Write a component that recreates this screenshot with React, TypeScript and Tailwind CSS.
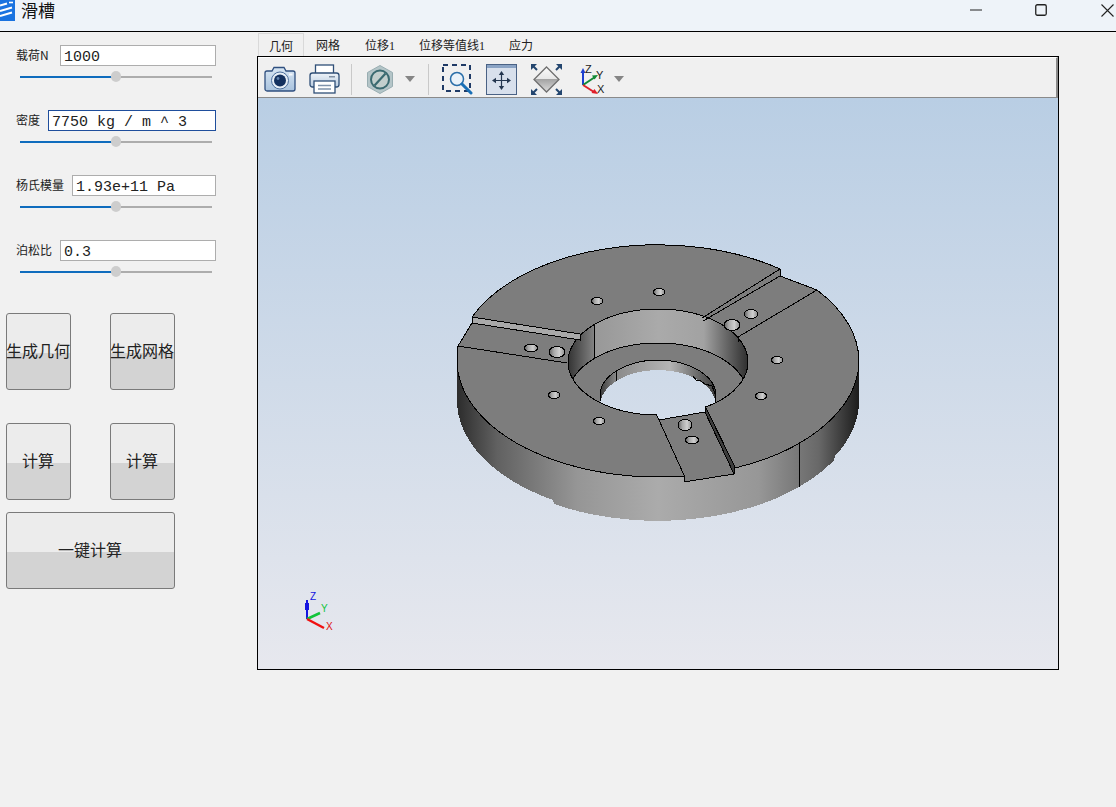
const tabs = ["几何", "网格", "位移1", "位移等值线1", "应力"];

const params = [
  { label: "载荷N", labelWidth: "w-9", value: "1000", focused: false },
  { label: "密度", labelWidth: "w-6", value: "7750 kg / m ^ 3", focused: true },
  { label: "杨氏模量", labelWidth: "w-12", value: "1.93e+11 Pa", focused: false },
  { label: "泊松比", labelWidth: "w-9", value: "0.3", focused: false },
];

// model holes: cx, cy, rx, ry
const holes = [
  [597, 301, 5.5, 3.5],
  [659, 292, 5.5, 3.5],
  [751, 314, 6.5, 4.5],
  [732, 325, 8, 5.5],
  [777, 360, 5.5, 3.5],
  [761, 396, 5.5, 3.5],
  [685, 425, 7, 5.5],
  [692, 440, 6.5, 4],
  [599, 421, 5.5, 3.5],
  [554, 395, 5.5, 3.5],
  [531, 348, 6.5, 4],
  [557, 352, 8, 5.5],
];

const ParamRow = ({ label, labelWidth, value, focused }: (typeof params)[number]) => (
  <div className="w-[216px] pl-4">
    <div className="flex h-[21px] items-center gap-2">
      <span className={`${labelWidth} -mt-[2px] whitespace-nowrap text-xs text-[#222] font-['Noto_Sans_CJK_SC',sans-serif]`}>
        {label}
      </span>
      <input
        readOnly
        value={value}
        className={`h-[21px] min-w-0 flex-1 border bg-white px-[3px] pt-[3px] text-[15px] leading-none text-[#222] outline-none font-['Liberation_Mono',monospace] ${
          focused ? "border-[#1f4e9c]" : "border-[#adadad]"
        }`}
      />
    </div>
    <div className="relative mt-[5px] ml-1 flex h-[11px] w-[192px] items-center">
      <div className="h-[2px] w-[96px] bg-[#0f6cbd]" />
      <div className="h-[2px] flex-1 bg-[#adadad]" />
      <div className="absolute left-[91px] top-0 h-[11px] w-[10px] rounded-full bg-[#cdcdcd]" />
    </div>
  </div>
);

const ActionButton = ({ text, wide }: { text: string; wide?: boolean }) => (
  <button
    className={`h-[77px] ${
      wide ? "col-span-2 w-[169px]" : "w-[65px]"
    } flex items-center justify-center whitespace-nowrap rounded-[3px] border border-[#7a7a7a] bg-[linear-gradient(#ececec_52%,#d3d3d3_52%)] pb-[4px] pr-[1px] text-base text-[#222] font-['Noto_Sans_CJK_SC',sans-serif]`}
  >
    {text}
  </button>
);

const Caret = () => (
  <svg width="10" height="6" viewBox="0 0 10 6" className="shrink-0">
    <polygon points="0,0 10,0 5,6" fill="#858585" />
  </svg>
);

const Sep = () => <div className="h-[31px] w-px shrink-0 bg-[#c9c9c9]" />;

const CameraIcon = () => (
  <svg width="32" height="26" viewBox="0 0 32 26" className="shrink-0">
    <defs>
      <linearGradient id="cam" x1="0" y1="0" x2="0" y2="1">
        <stop offset="0" stopColor="#d8e6f3" />
        <stop offset="1" stopColor="#a9c3de" />
      </linearGradient>
    </defs>
    <path
      d="M3 5h5l2-3.500h10l2 3.500h7a2 2 0 0 1 2 2v16a2 2 0 0 1-2 2H3a2 2 0 0 1-2-2V7a2 2 0 0 1 2-2z"
      fill="url(#cam)"
      stroke="#2f4f7f"
      strokeWidth="1.3"
    />
    <circle cx="16" cy="14.500" r="8.500" fill="#e6eef6" stroke="#4d6f9c" />
    <circle cx="16" cy="14.500" r="6" fill="#14315f" />
    <circle cx="14" cy="12.500" r="1.400" fill="#5f81ad" />
    <rect x="25" y="7.500" width="3.500" height="2" fill="#f5f8fb" />
  </svg>
);

const PrinterIcon = () => (
  <svg width="31" height="30" viewBox="0 0 31 30" className="shrink-0">
    <defs>
      <linearGradient id="prn" x1="0" y1="0" x2="0" y2="1">
        <stop offset="0" stopColor="#eef3f8" />
        <stop offset="1" stopColor="#b8cbe0" />
      </linearGradient>
    </defs>
    <rect x="6.500" y="1" width="18" height="10" fill="#fff" stroke="#2f4f77" strokeWidth="1.3" />
    <rect x="1" y="9" width="29" height="14" rx="2.500" fill="url(#prn)" stroke="#2f4f77" strokeWidth="1.3" />
    <rect x="20" y="12" width="6" height="1.500" fill="#7f8fa3" />
    <rect x="5" y="17" width="21" height="12" fill="#fff" stroke="#2f4f77" strokeWidth="1.3" />
    <path d="M9 21.500h13M9 25h13" stroke="#7f93ab" strokeWidth="1.300" />
  </svg>
);

const HexIcon = () => (
  <svg width="26" height="29" viewBox="0 0 26 29" className="shrink-0">
    <polygon points="13,0.500 25.500,7.500 25.500,21.500 13,28.500 0.500,21.500 0.500,7.500" fill="#b4c5c8" stroke="#98adb1" />
    <circle cx="13" cy="14.500" r="9" fill="#c2cfcd" stroke="#3a6a70" strokeWidth="2" />
    <path d="M7.500 20.500L18.500 8.500" stroke="#3a6a70" strokeWidth="2.200" />
  </svg>
);

const ZoomBoxIcon = () => (
  <svg width="31" height="31" viewBox="0 0 31 31" className="shrink-0">
    <rect x="1" y="1" width="27" height="26" fill="none" stroke="#1f3a66" strokeWidth="2" strokeDasharray="5 4" />
    <circle cx="15" cy="15" r="6.500" fill="#eaf2f9" stroke="#2a6ea8" strokeWidth="1.500" />
    <path d="M20 20l9 9" stroke="#1a6fb5" strokeWidth="3" strokeLinecap="round" />
  </svg>
);

const FitIcon = () => (
  <svg width="31" height="31" viewBox="0 0 31 31" className="shrink-0">
    <rect x="0.500" y="0.500" width="30" height="30" fill="#d8e0ec" stroke="#4a6285" />
    <rect x="1" y="1" width="29" height="3" fill="#8aa3c4" />
    <path d="M15.500 9v14M8 16.500h15" stroke="#24364f" strokeWidth="1.200" />
    <polygon points="15.500,7 12.800,11 18.200,11" fill="#24364f" />
    <polygon points="15.500,26 12.800,22 18.200,22" fill="#24364f" />
    <polygon points="6,16.500 10,13.800 10,19.200" fill="#24364f" />
    <polygon points="25,16.500 21,13.800 21,19.200" fill="#24364f" />
  </svg>
);

const DiamondIcon = () => (
  <svg width="31" height="31" viewBox="0 0 31 31" className="shrink-0">
    <defs>
      <linearGradient id="dia" x1="0" y1="0" x2="0" y2="1">
        <stop offset="0" stopColor="#fafafa" />
        <stop offset="0.500" stopColor="#e6e6e6" />
        <stop offset="0.500" stopColor="#a4a4a4" />
        <stop offset="1" stopColor="#dcdcdc" />
      </linearGradient>
    </defs>
    <polygon points="15.500,3 28,15.500 15.500,28 3,15.500" fill="url(#dia)" stroke="#6f6f6f" strokeWidth="1.300" />
    <g stroke="#24466f" strokeWidth="2">
      <path d="M2 2l4 4M29 2l-4 4M2 29l4-4M29 29l-4-4" />
    </g>
    <g fill="#24466f">
      <polygon points="0,0 6,0 0,6" />
      <polygon points="31,0 25,0 31,6" />
      <polygon points="0,31 6,31 0,25" />
      <polygon points="31,31 25,31 31,25" />
    </g>
  </svg>
);

const AxesIcon = () => (
  <svg width="30" height="31" viewBox="0 0 30 31" className="shrink-0">
    <path d="M6 21V8" stroke="#1c3fd0" strokeWidth="2" />
    <polygon points="6,4 3.500,9 8.500,9" fill="#1c3fd0" />
    <path d="M6 21l12-8" stroke="#118a35" strokeWidth="2" />
    <polygon points="21,11 15,11.500 17.500,15.500" fill="#118a35" />
    <path d="M6 21l11 7" stroke="#e0202a" strokeWidth="2" />
    <polygon points="21,30 14.500,29 17.500,25" fill="#e0202a" />
    <text x="8" y="9" fontSize="11" fill="#222" fontFamily="Liberation Sans, sans-serif">Z</text>
    <text x="19" y="15" fontSize="11" fill="#222" fontFamily="Liberation Sans, sans-serif">Y</text>
    <text x="20" y="29" fontSize="11" fill="#222" fontFamily="Liberation Sans, sans-serif">X</text>
  </svg>
);

const Model = () => (
  <svg viewBox="258 98 800 571" className="block h-full w-full">
    <defs>
      <linearGradient id="sky" gradientUnits="userSpaceOnUse" x1="0" y1="98" x2="0" y2="669">
        <stop offset="0" stopColor="#b9cee4" />
        <stop offset="1" stopColor="#e7e8ee" />
      </linearGradient>
      <linearGradient id="side" gradientUnits="userSpaceOnUse" x1="457" y1="0" x2="859" y2="0">
        <stop offset="0" stopColor="#2c2c2c" />
        <stop offset="0.1" stopColor="#616161" />
        <stop offset="0.3" stopColor="#969696" />
        <stop offset="0.5" stopColor="#ababab" />
        <stop offset="0.75" stopColor="#979797" />
        <stop offset="0.9" stopColor="#686868" />
        <stop offset="1" stopColor="#1c1c1c" />
      </linearGradient>
      <linearGradient id="wall" gradientUnits="userSpaceOnUse" x1="568" y1="0" x2="749" y2="0">
        <stop offset="0" stopColor="#333" />
        <stop offset="0.14" stopColor="#808080" />
        <stop offset="0.15" stopColor="#989898" />
        <stop offset="0.5" stopColor="#aaa" />
        <stop offset="0.75" stopColor="#a2a2a2" />
        <stop offset="1" stopColor="#2c2c2c" />
      </linearGradient>
      <linearGradient id="holeWall" gradientUnits="userSpaceOnUse" x1="600" y1="0" x2="716" y2="0">
        <stop offset="0" stopColor="#3a3a3a" />
        <stop offset="0.14" stopColor="#8a8a8a" />
        <stop offset="0.6" stopColor="#b5b5b5" />
        <stop offset="1" stopColor="#3a3a3a" />
      </linearGradient>
      <linearGradient id="hole" x1="0" y1="0" x2="1" y2="0">
        <stop offset="0" stopColor="#5e5e5e" />
        <stop offset="0.3" stopColor="#a8a8a8" />
        <stop offset="0.65" stopColor="#d0d0d0" />
        <stop offset="1" stopColor="#8a8a8a" />
      </linearGradient>
      <clipPath id="bore">
        <ellipse cx="658" cy="362" rx="90" ry="53" />
      </clipPath>
    </defs>

    <g shapeRendering="crispEdges" stroke="#000" strokeWidth="1">
      {/* outer wall */}
      <path
        d="M457 362V400A201 117 0 0 0 553 500L554 504A201 117 0 0 0 834 460L835 456A201 117 0 0 0 859 402V362Z"
        fill="url(#side)"
        stroke="none"
      />
      {/* top face */}
      <path
        d="M472 317A201 117 0 0 1 780 269L780 276L817 290A201 117 0 0 1 859 362A201 117 0 0 1 735 468L734 474L684 482L684 476A201 117 0 0 1 457 362L458 346L472 323Z"
        fill="#7d7d7d"
      />
      <path d="M799 444V487" fill="none" />

      {/* counterbore */}
      <ellipse cx="658" cy="362" rx="90" ry="53" fill="url(#wall)" />
      <g clipPath="url(#bore)">
        <path d="M594 320V360" fill="none" />
        <ellipse cx="658" cy="396" rx="90" ry="53" fill="#7d7d7d" />
        <ellipse cx="658" cy="396" rx="58" ry="36" fill="url(#holeWall)" />
        <ellipse cx="658" cy="406" rx="58" ry="36" fill="url(#sky)" stroke="none" />
        <path d="M616 371V381" fill="none" />
        <path d="M693 376L696 380L701 381L705 384L712 386L716 396" fill="none" />
      </g>
      <ellipse cx="658" cy="362" rx="90" ry="53" fill="none" />

      {/* front slot */}
      <polygon points="656,413 659,420 705,412 705,405" fill="url(#sky)" stroke="none" />
      <polygon points="659,420 705,412 734,474 684,482 684,475" fill="#7d7d7d" />
      <polygon points="705,406 735,467 734,474 705,412" fill="#3d3d3d" />
      <path d="M656 414L659 420" fill="none" />

      {/* left slot */}
      <polygon points="472,317 580,334 580,340 472,323" fill="#a9a9a9" />
      <path d="M458 346L567 363" fill="none" />

      {/* right slot */}
      <path d="M780 269L702 318M780 276L703 321M817 290L738 337L738 342" fill="none" />

      {holes.map(([cx, cy, rx, ry]) => (
        <ellipse key={`${cx}-${cy}`} cx={cx} cy={cy} rx={rx} ry={ry} fill="url(#hole)" />
      ))}
    </g>

    {/* triad */}
    <path d="M307 619V600" stroke="#1414e0" strokeWidth="2" />
    <rect x="305" y="603" width="4" height="7" fill="#1414e0" />
    <path d="M307 619L320 613" stroke="#12c43a" strokeWidth="2.500" />
    <path d="M307 619L324 628" stroke="#f01010" strokeWidth="2.500" />
    <text x="310" y="600" fontSize="10" fill="#1414e0" fontFamily="Liberation Sans, sans-serif">Z</text>
    <text x="321" y="612" fontSize="10" fill="#12c43a" fontFamily="Liberation Sans, sans-serif">Y</text>
    <text x="326" y="630" fontSize="10" fill="#e01010" fontFamily="Liberation Sans, sans-serif">X</text>
  </svg>
);

export default function App() {
  return (
    <div className="flex h-[807px] w-full flex-col overflow-hidden bg-[#f1f1f1]">
      {/* title bar */}
      <div className="flex h-[32px] shrink-0 border-b border-black bg-[#eef3f9]">
        <div className="flex h-[21px] flex-1 items-start">
          <svg width="15" height="21" viewBox="0 0 15 21" className="shrink-0">
            <rect width="15" height="21" fill="#1a73e0" />
            <path d="M0 5.500L7 3.500M0 11L12 7.500M0 16L12 12.500" stroke="#fff" strokeWidth="2" fill="none" />
            <path d="M9 2.500h4" stroke="#fff" strokeWidth="1.600" />
          </svg>
          <span className="ml-[6px] text-[17px] leading-[20px] text-[#111] font-['Noto_Sans_CJK_SC',sans-serif]">
            滑槽
          </span>
        </div>
        <div className="flex h-[20px] items-center">
          <svg width="12" height="2" viewBox="0 0 12 2" className="-mt-[1px]">
            <path d="M0 1H12" stroke="#222" strokeWidth="1" />
          </svg>
          <svg width="12" height="12" viewBox="0 0 12 12" className="ml-[53px]">
            <rect x="0.750" y="0.750" width="10.500" height="10.500" rx="1.500" fill="none" stroke="#222" strokeWidth="1.300" />
          </svg>
          <svg width="13" height="13" viewBox="0 0 13 13" className="ml-[54px] mr-[2px]">
            <path d="M0.500 0.500L12.500 12.500M12.500 0.500L0.500 12.500" stroke="#222" strokeWidth="1.100" />
          </svg>
        </div>
      </div>

      <div className="flex flex-1">
        {/* parameters */}
        <div className="w-[257px] shrink-0 pt-[13px]">
          <div className="flex flex-col gap-7">
            {params.map((p) => (
              <ParamRow key={p.label} {...p} />
            ))}
          </div>
          <div className="mt-9 ml-[6px] grid w-[169px] grid-cols-[65px_65px] justify-between">
            <ActionButton text="生成几何" />
            <ActionButton text="生成网格" />
            <div className="mt-[33px]">
              <ActionButton text="计算" />
            </div>
            <div className="mt-[33px]">
              <ActionButton text="计算" />
            </div>
            <div className="col-span-2 mt-3">
              <ActionButton text="一键计算" wide />
            </div>
          </div>
        </div>

        {/* viewer */}
        <div className="w-[802px] shrink-0 pt-[1px]">
          <div className="flex h-[23px] pl-px text-xs text-[#222] font-['Liberation_Serif','Noto_Sans_CJK_SC',serif]">
            {tabs.map((t, i) => (
              <div
                key={t}
                className={`relative flex h-[23px] items-center pt-[3px] ${
                  i === 0
                    ? "z-10 w-[46px] justify-center border border-b-0 border-[#d9d9d9] bg-[#f0f0f0]"
                    : i === 1
                      ? "mr-px px-3"
                      : "px-3"
                }`}
              >
                {t}
              </div>
            ))}
          </div>
          <div className="flex h-[614px] flex-col border border-black">
            <div className="flex h-[41px] shrink-0 items-center border-t border-r-2 border-b border-t-white border-r-[#8a8a8a] border-b-[#8a8a8a] bg-[#f0f0f0] pl-[6px] pt-[3px]">
              <CameraIcon />
              <div className="ml-[13px]">
                <PrinterIcon />
              </div>
              <div className="ml-[11px]">
                <Sep />
              </div>
              <div className="ml-[15px]">
                <HexIcon />
              </div>
              <div className="ml-[12px]">
                <Caret />
              </div>
              <div className="ml-[13px]">
                <Sep />
              </div>
              <div className="ml-[13px]">
                <ZoomBoxIcon />
              </div>
              <div className="ml-[13px]">
                <FitIcon />
              </div>
              <div className="ml-[14px]">
                <DiamondIcon />
              </div>
              <div className="ml-[15px]">
                <AxesIcon />
              </div>
              <div className="ml-[7px]">
                <Caret />
              </div>
            </div>
            <div className="min-h-0 flex-1 bg-[linear-gradient(#b9cee4,#e7e8ee)]">
              <Model />
            </div>
          </div>
        </div>
      </div>
    </div>
  );
}
